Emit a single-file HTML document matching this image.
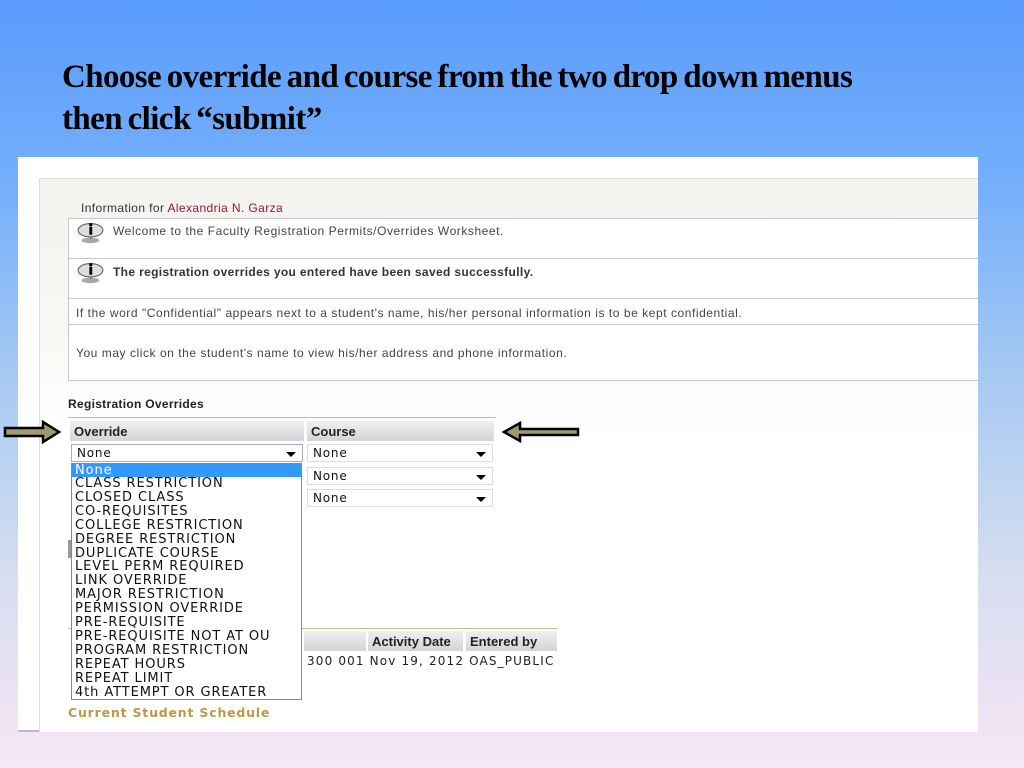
<!DOCTYPE html>
<html><head><meta charset="utf-8"><style>
*{margin:0;padding:0;box-sizing:border-box}
body{width:1024px;height:768px;overflow:hidden;position:relative;background:linear-gradient(#5a9cfd 0%,#76b0fb 25%,#a9caf2 50%,#d6def0 75%,#f6e6f6 100%);font-family:"Liberation Sans",Arial,sans-serif}
.a{position:absolute}
h1{position:absolute;left:62px;top:56px;font-family:"Liberation Serif",serif;font-size:33px;font-weight:bold;letter-spacing:-0.6px;word-spacing:-2px;line-height:42px;color:#000;white-space:nowrap}
.shot{left:18px;top:157px;width:960px;height:575px;background:#fff;border-bottom:2px solid #bbb}
.panel{left:39px;top:178px;width:939px;height:554px;border-left:1px solid #ddd;border-top:1px solid #ddd;background:linear-gradient(#f4f3f0 0px,#f4f3f0 30px,#faf9f6 170px,#fff 260px)}
.box{position:absolute;left:68px;width:910px;background:#fff;border:1px solid #c8c8c8;border-right:none;font-size:12px;letter-spacing:0.55px;color:#444;white-space:nowrap}
.ic{position:absolute;left:8px;width:27px;height:23px}
.v{font-family:"DejaVu Sans",Verdana,sans-serif}
.th{position:absolute;top:421px;height:20px;background:linear-gradient(#f0f0f0,#d4d4d4);font-weight:bold;font-size:13px;color:#222;padding:3px 4px;white-space:nowrap}
.sel{position:absolute;height:18px;background:#fff;border:1px solid #ddd;font-size:12px;padding:1px 5px;color:#111;letter-spacing:0.8px}
.sel:after{content:"";position:absolute;right:6px;top:7px;border-left:5px solid transparent;border-right:5px solid transparent;border-top:5px solid #000}
.list{left:71px;top:463px;width:231px;height:237px;background:#fff;border:1px solid #888;font-size:13px;line-height:13.9px;color:#111;letter-spacing:0.9px}
.list div{padding-left:3px;white-space:nowrap}
</style></head><body>
<h1>Choose override and course from the two drop down menus<br>then click “submit”</h1>
<div class="a shot"></div>
<div class="a panel"></div>
<div class="a" style="left:81px;top:201px;font-size:12px;letter-spacing:0.4px;color:#333">Information for <span style="color:#8b1a3a">Alexandria N. Garza</span></div>
<div class="box" style="top:218px;height:41px"><svg class="ic" style="top:2px" viewBox="0 0 24 20"><ellipse cx="12" cy="8" rx="11" ry="6" fill="#ddd" stroke="#666"/><ellipse cx="12" cy="17" rx="8" ry="2.5" fill="#aaa"/><path d="M10 13l2 4 2-4z" fill="#888"/><rect x="11" y="5" width="2.5" height="7" fill="#000"/><circle cx="12.2" cy="3" r="1.5" fill="#000"/></svg><span class="a" style="left:44px;top:5px">Welcome to the Faculty Registration Permits/Overrides Worksheet.</span></div>
<div class="box" style="top:258px;height:41px"><svg class="ic" style="top:2px" viewBox="0 0 24 20"><ellipse cx="12" cy="8" rx="11" ry="6" fill="#ddd" stroke="#666"/><ellipse cx="12" cy="17" rx="8" ry="2.5" fill="#aaa"/><path d="M10 13l2 4 2-4z" fill="#888"/><rect x="11" y="5" width="2.5" height="7" fill="#000"/><circle cx="12.2" cy="3" r="1.5" fill="#000"/></svg><b class="a" style="left:44px;top:6px;color:#333;letter-spacing:0.35px">The registration overrides you entered have been saved successfully.</b></div>
<div class="box" style="top:298px;height:27px"><span class="a" style="left:7px;top:7px">If the word "Confidential" appears next to a student's name, his/her personal information is to be kept confidential.</span></div>
<div class="box" style="top:324px;height:57px"><span class="a" style="left:7px;top:21px">You may click on the student's name to view his/her address and phone information.</span></div>
<div class="a" style="left:68px;top:397px;font-size:12px;font-weight:bold;color:#222;letter-spacing:0.3px">Registration Overrides</div>
<div class="a" style="left:68px;top:417px;width:428px;border-top:1px solid #c9b98a"></div>
<div class="th" style="left:70px;width:234px">Override</div>
<div class="th" style="left:307px;width:187px">Course</div>
<div class="sel v" style="left:71px;top:444px;width:232px;border-color:#aac">None</div>
<div class="sel v" style="left:307px;top:444px;width:186px">None</div>
<div class="sel v" style="left:307px;top:467px;width:186px">None</div>
<div class="sel v" style="left:307px;top:489px;width:186px">None</div>
<div class="a" style="left:68px;top:540px;width:3px;height:18px;background:#999"></div>
<div class="a" style="left:68px;top:628px;width:490px;border-top:1px solid #c9b98a"></div>
<div class="th" style="top:631px;left:304px;width:62px"></div>
<div class="th" style="top:631px;left:368px;width:95px">Activity Date</div>
<div class="th" style="top:631px;left:466px;width:91px">Entered by</div>
<div class="a v" style="left:307px;top:654px;font-size:12px;color:#222;white-space:nowrap;letter-spacing:1.15px">300 001 Nov 19, 2012 OAS_PUBLIC</div>
<div class="a list v">
<div style="background:#3399ff;color:#fff;height:13px">None</div>
<div>CLASS RESTRICTION</div><div>CLOSED CLASS</div><div>CO-REQUISITES</div><div>COLLEGE RESTRICTION</div><div>DEGREE RESTRICTION</div><div>DUPLICATE COURSE</div><div>LEVEL PERM REQUIRED</div><div>LINK OVERRIDE</div><div>MAJOR RESTRICTION</div><div>PERMISSION OVERRIDE</div><div>PRE-REQUISITE</div><div>PRE-REQUISITE NOT AT OU</div><div>PROGRAM RESTRICTION</div><div>REPEAT HOURS</div><div>REPEAT LIMIT</div><div>4th ATTEMPT OR GREATER</div>
</div>
<div class="a v" style="left:68px;top:705px;font-size:12.5px;font-weight:bold;color:#b89a48;letter-spacing:0.8px">Current Student Schedule</div>
<svg class="a" style="left:3px;top:420px" width="60" height="24" viewBox="0 0 60 24"><path d="M2 8H40V2L56 12 40 22V16H2z" fill="#a09a72" stroke="#000" stroke-width="2.5"/></svg>
<svg class="a" style="left:500px;top:420px" width="84" height="24" viewBox="0 0 84 24"><path d="M78 9H20V3L4 12 20 21V15H78z" fill="#a09a72" stroke="#000" stroke-width="2.5"/></svg>
</body></html>
